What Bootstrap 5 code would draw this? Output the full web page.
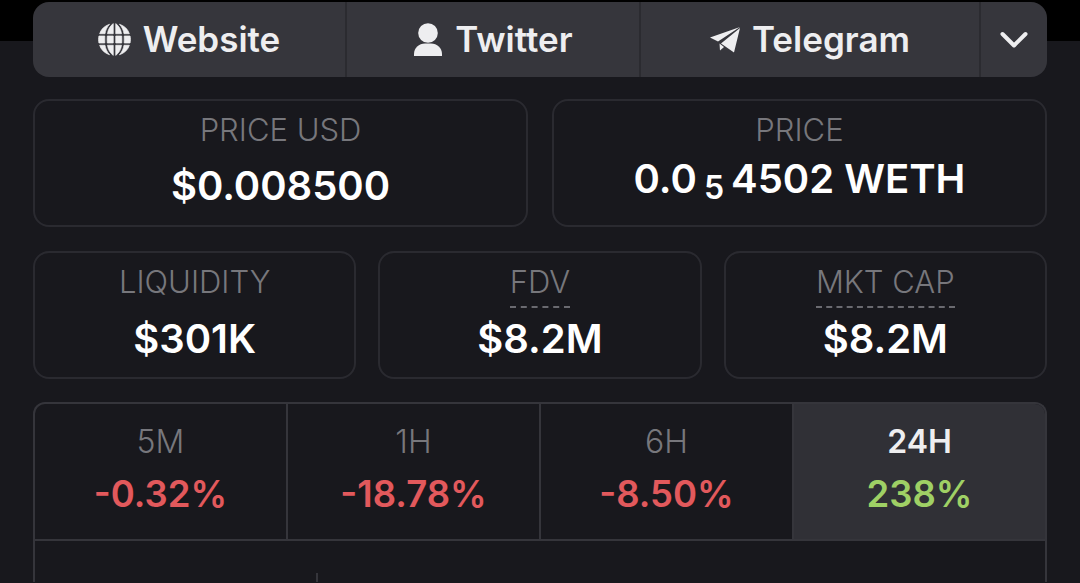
<!DOCTYPE html>
<html lang="en">
<head>
    <meta charset="UTF-8">
    <meta name="viewport" content="width=device-width, initial-scale=1.0">
    <title>Token Stats</title>
    <link href="https://cdn.jsdelivr.net/npm/bootstrap@5.3.0/dist/css/bootstrap.min.css" rel="stylesheet">
    <style>
        html, body {
            height: 583px;
            overflow: hidden;
        }
        body {
            background-color: #18181d;
            font-family: Inter, "Open Sans", sans-serif;
            color: #fff;
        }
        .top-strip {
            height: 41px;
            background-color: #000;
        }
        .page-wrap {
            margin-top: -39px;
            padding: 0 33px;
        }
        /* links bar */
        .link-bar {
            height: 75px;
            background-color: #36363c;
            border-radius: 16px;
            overflow: hidden;
        }
        .link-item {
            color: #eeeef0;
            font-size: 35px;
            font-weight: 600;
            gap: 12px;
            border-right: 2px solid #2b2b30;
        }
        .link-web { width: 314px; }
        .link-tw { width: 294px; }
        .link-tg { width: 340px; }
        .link-more { flex: 1; }
        .link-more.link-item { border-right: 0; }
        /* stat boxes */
        .stat-row {
            margin-top: 22px;
            gap: 24px;
        }
        .stat-row.three {
            margin-top: 24px;
            gap: 22px;
        }
        .stat-box {
            flex: 1 1 0;
            height: 128px;
            border: 2px solid #2a2a30;
            border-radius: 16px;
            text-align: center;
            padding-top: 10px;
        }
        .stat-label {
            color: #77777c;
            font-size: 31px;
            font-weight: 300;
            line-height: 38px;
        }
        .stat-label.dashed {
            display: inline-block;
            line-height: 38px;
            padding-bottom: 5px;
            border-bottom: 2px dashed #6a6a70;
        }
        .stat-value {
            font-size: 40px;
            font-weight: 600;
            line-height: 50px;
            margin-top: 5px;
        }
        .stat-value.low { margin-top: 12px; }
        .stat-value.mid { margin-top: 13px; }
        .stat-value sub {
            font-size: 32px;
            bottom: -.2em;
            margin: 0 7px;
        }
        .stat-value.after-dash { margin-top: 6px; }
        /* change table */
        .change-table {
            margin-top: 23px;
            height: 180px;
            border: 2px solid #35353b;
            border-bottom: 0;
            border-radius: 12px 12px 0 0;
            overflow: hidden;
        }
        .change-head {
            height: 137px;
            border-bottom: 2px solid #35353b;
        }
        .change-cell {
            flex: 1 1 0;
            text-align: center;
            padding-top: 18px;
            border-right: 2px solid #35353b;
        }
        .change-cell:last-child { border-right: 0; }
        .change-cell.active { background-color: #303036; }
        .change-label {
            color: #77777c;
            font-size: 32px;
            font-weight: 300;
            line-height: 40px;
        }
        .active .change-label {
            color: #eeeef0;
            font-weight: 600;
        }
        .change-value {
            font-size: 36.5px;
            font-weight: 600;
            line-height: 50px;
            margin-top: 7px;
        }
        .text-down { color: #e2595c; }
        .text-up { color: #9fd065; }
        .tick {
            width: 2px;
            height: 12px;
            margin: 32px 0 0 281px;
            background-color: #35353b;
        }
    </style>
</head>
<body>
    <div class="top-strip"></div>
    <div class="page-wrap position-relative">
        <!-- Links -->
        <div class="link-bar d-flex">
            <div class="link-item link-web d-flex align-items-center justify-content-center">
                <svg width="33" height="33" viewBox="0 0 32 32" fill="#eeeef0" stroke="#eeeef0" stroke-width=".7">
                    <path d="M11.2 1.2C8.6 4 7.2 7.4 6.8 10.4H1.6C3 6 6.6 2.6 11.2 1.2zM20.8 1.2C25.4 2.6 29 6 30.4 10.4h-5.2C24.8 7.4 23.4 4 20.8 1.2zM14.8.6v9.8H9.2C9.7 6.6 11.6 3 14.8.6zM17.2.6c3.2 2.4 5.1 6 5.6 9.8h-5.6zM.9 12.6h5.7c-.1 2.2-.1 4.600 0 6.800H.9c-.5-2.200-.5-4.600 0-6.800zM9 12.600h5.800v6.800H9c-.2-2.200-.2-4.600 0-6.800zM17.200 12.600H23c.2 2.200.2 4.600 0 6.800h-5.800zM25.400 12.600h5.700c.5 2.200.5 4.600 0 6.800h-5.700c.1-2.200.1-4.600 0-6.800zM1.600 21.600h5.200c.4 3 1.800 6.400 4.400 9.200C6.600 29.400 3 26 1.600 21.600zM9.200 21.600h5.600v9.800c-3.200-2.400-5.100-6-5.600-9.800zM17.200 21.600h5.600c-.5 3.800-2.400 7.400-5.600 9.800zM25.200 21.600h5.200C29 26 25.400 29.400 20.800 30.800c2.600-2.800 4-6.200 4.400-9.200z"/>
                </svg>
                <span>Website</span>
            </div>
            <div class="link-item link-tw d-flex align-items-center justify-content-center">
                <svg width="30" height="34" viewBox="0 0 30 34" fill="#eeeef0">
                    <circle cx="15" cy="10" r="9.800"/>
                    <path d="M1 33v-2c0-6 5-10.500 11-10.500h6c6 0 11 4.500 11 10.500v2z"/>
                </svg>
                <span>Twitter</span>
            </div>
            <div class="link-item link-tg d-flex align-items-center justify-content-center">
                <svg width="30" height="26" viewBox="0 0 30 26" fill="#eeeef0">
                    <path d="M30 0 0 10.500l8 4L30 0zM30 1 11 16.500l13 9L30 1z"/>
                    <path d="M9.500 16.500l.5 7 4-3.500z"/>
                </svg>
                <span>Telegram</span>
            </div>
            <div class="link-item link-more d-flex align-items-center justify-content-center">
                <svg width="28" height="18" viewBox="0 0 28 18" fill="none" stroke="#eeeef0" stroke-width="4" stroke-linecap="round" stroke-linejoin="round">
                    <path d="M2.500 3 14 14.500 25.500 3"/>
                </svg>
            </div>
        </div>

        <!-- Price -->
        <div class="stat-row d-flex">
            <div class="stat-box">
                <div class="stat-label">PRICE USD</div>
                <div class="stat-value low">$0.008500</div>
            </div>
            <div class="stat-box">
                <div class="stat-label">PRICE</div>
                <div class="stat-value">0.0<sub>5</sub>4502 WETH</div>
            </div>
        </div>

        <!-- Liquidity, FDV, market cap -->
        <div class="stat-row three d-flex">
            <div class="stat-box">
                <div class="stat-label">LIQUIDITY</div>
                <div class="stat-value mid">$301K</div>
            </div>
            <div class="stat-box">
                <div class="stat-label dashed">FDV</div>
                <div class="stat-value after-dash">$8.2M</div>
            </div>
            <div class="stat-box">
                <div class="stat-label dashed">MKT CAP</div>
                <div class="stat-value after-dash">$8.2M</div>
            </div>
        </div>

        <!-- Price change -->
        <div class="change-table">
            <div class="change-head d-flex">
                <div class="change-cell">
                    <div class="change-label">5M</div>
                    <div class="change-value text-down">-0.32%</div>
                </div>
                <div class="change-cell">
                    <div class="change-label">1H</div>
                    <div class="change-value text-down">-18.78%</div>
                </div>
                <div class="change-cell">
                    <div class="change-label">6H</div>
                    <div class="change-value text-down">-8.50%</div>
                </div>
                <div class="change-cell active">
                    <div class="change-label">24H</div>
                    <div class="change-value text-up">238%</div>
                </div>
            </div>
            <div class="tick"></div>
        </div>
    </div>

    <script src="https://cdn.jsdelivr.net/npm/bootstrap@5.3.0/dist/js/bootstrap.bundle.min.js"></script>
</body>
</html>
